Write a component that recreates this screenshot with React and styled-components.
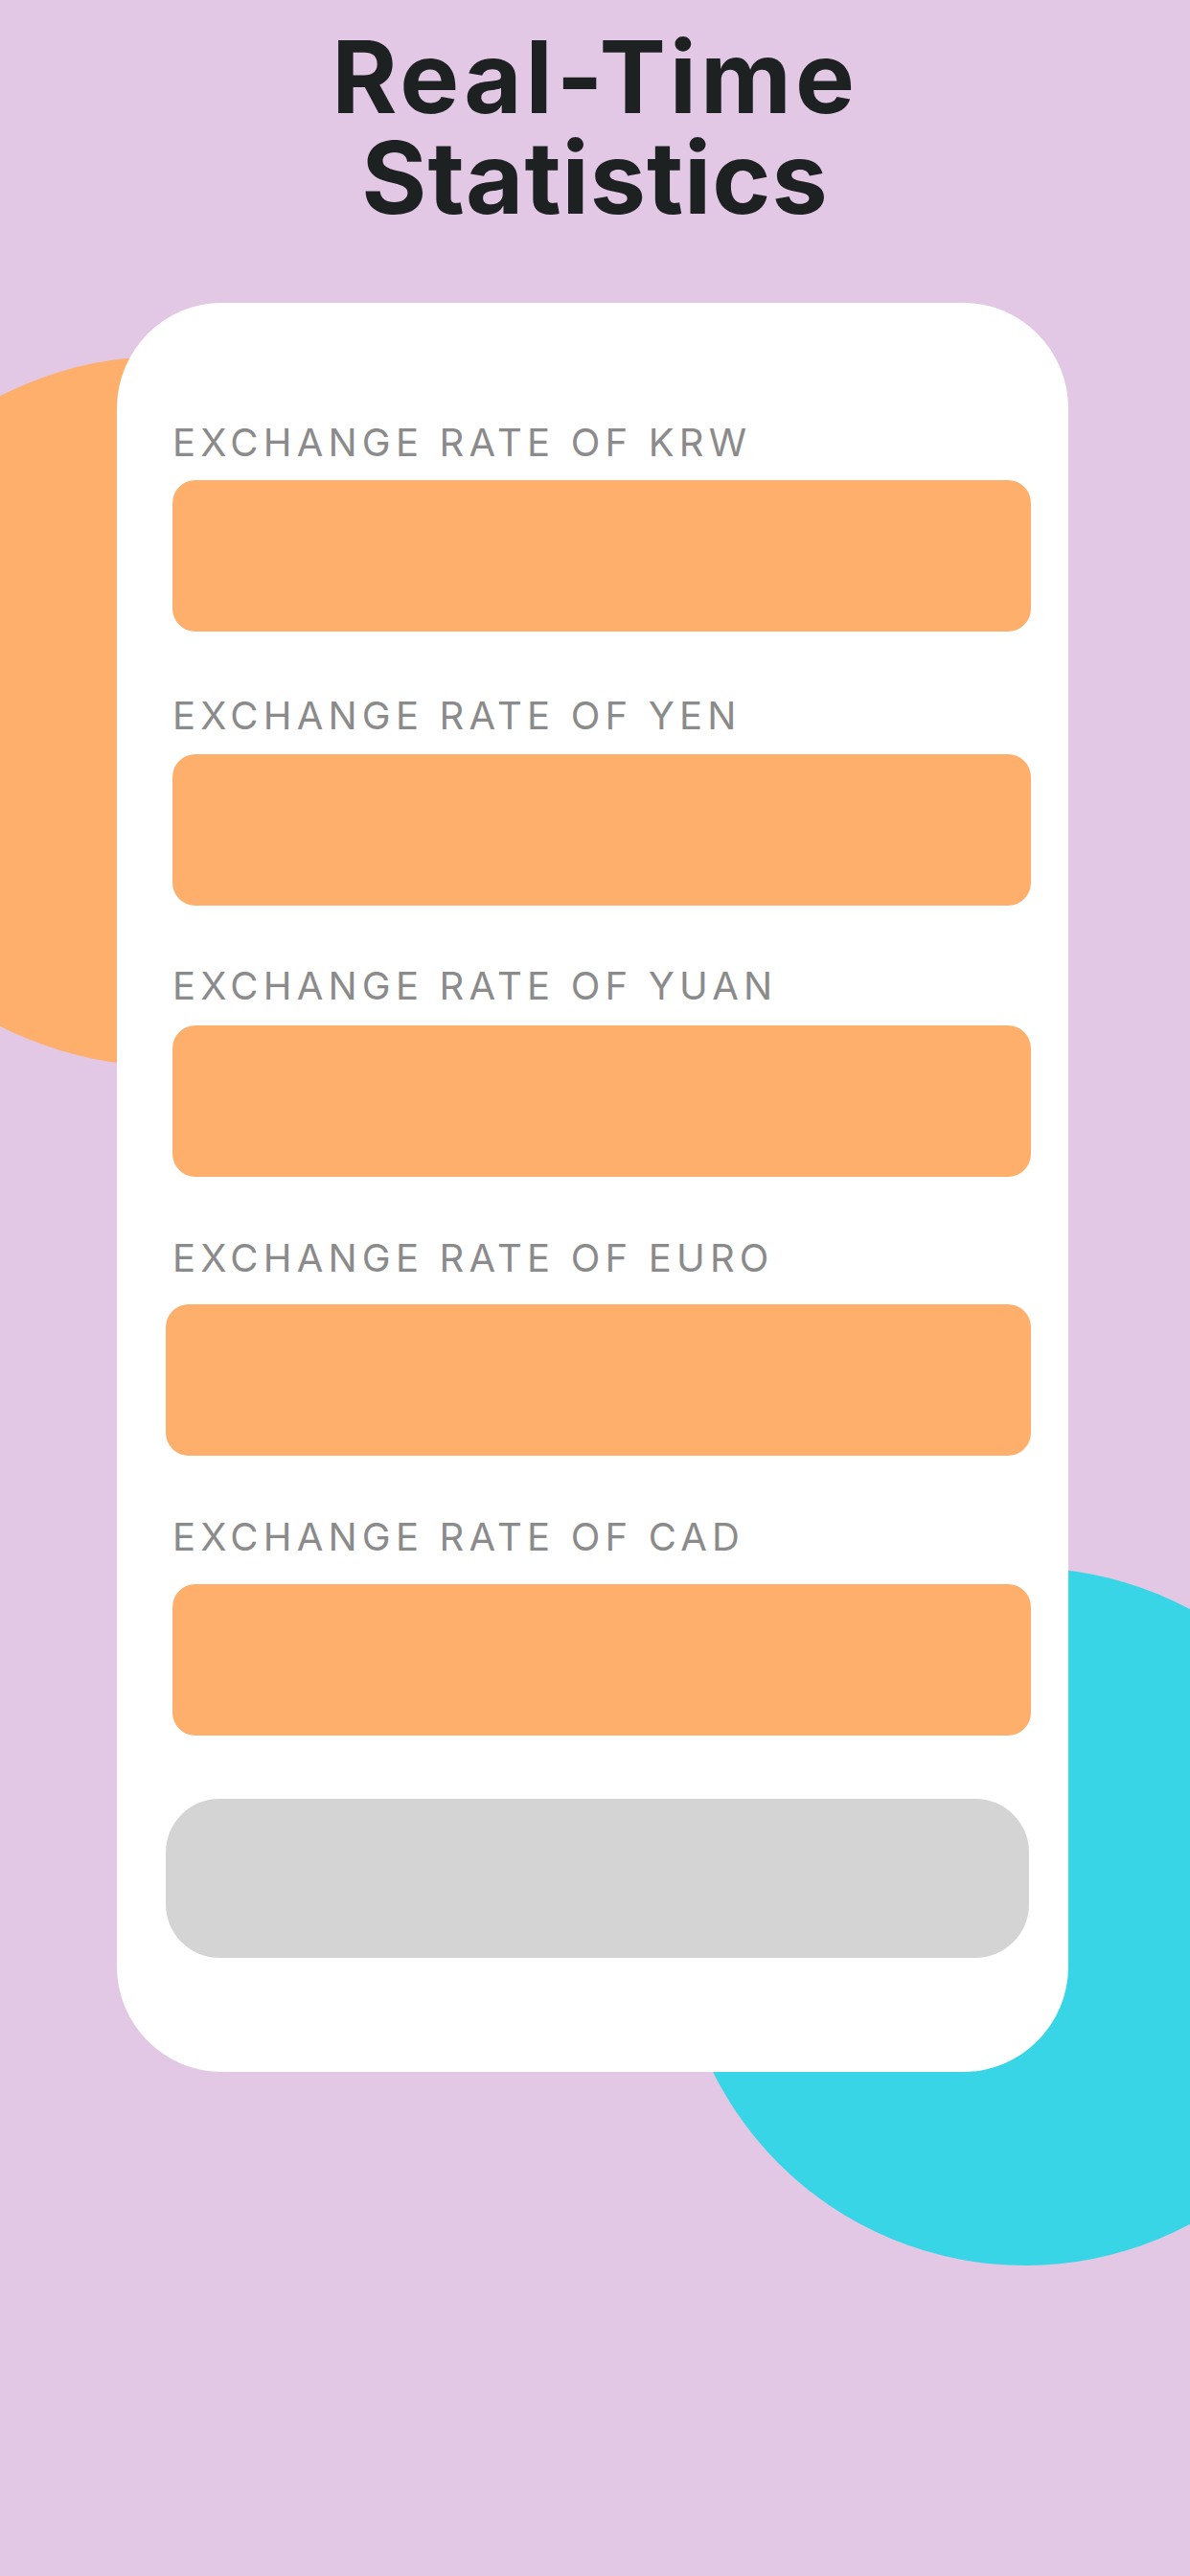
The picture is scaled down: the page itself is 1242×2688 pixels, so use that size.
import React from "react";
import styled, { createGlobalStyle } from "styled-components";

const GlobalStyle = createGlobalStyle`
  html, body {
    margin: 0;
    padding: 0;
    background: #e2c8e4;
  }
`;

const Page = styled.div`
  position: relative;
  min-height: 100vh;
  overflow: hidden;
  background: #e2c8e4;
  padding-top: 28px;
  box-sizing: border-box;
`;

// decorative circles sitting behind the card
const Blob = styled.div`
  position: absolute;
  left: ${(p) => p.$left}px;
  top: ${(p) => p.$top}px;
  width: ${(p) => p.$size}px;
  height: ${(p) => p.$size}px;
  border-radius: 50%;
  background: ${(p) => p.$color};
`;

const Title = styled.h1`
  position: relative;
  margin: 0;
  text-align: center;
  font-family: Inter, "Noto Sans", sans-serif;
  font-weight: 700;
  font-size: 104px;
  color: #1e2122;
`;

const TitleLine = styled.span`
  display: block;
  height: 105px;
  line-height: 105px;
  letter-spacing: ${(p) => p.$spacing}px;
`;

const Card = styled.div`
  position: relative;
  margin: 78px 0 0 122px;
  width: 993px;
  box-sizing: border-box;
  padding: 126px 39px 119px 58px;
  background: #fff;
  border-radius: 110px;
  display: flex;
  flex-direction: column;
`;

const Field = styled.div`
  display: flex;
  flex-direction: column;
  margin-top: ${(p) => p.$top}px;
`;

const Label = styled.label`
  font-family: Inter, "Noto Sans", sans-serif;
  font-weight: 400;
  font-size: 40px;
  line-height: 40px;
  letter-spacing: 5.2px;
  color: #8b8b8b;
  white-space: nowrap;
`;

const RateBox = styled.div`
  margin-top: ${(p) => p.$gap}px;
  margin-left: ${(p) => p.$shift || 0}px;
  height: 158px;
  border-radius: 24px;
  background: #fdaf6b;
`;

const SubmitButton = styled.button`
  margin: 66px 0 0 -7px;
  width: 901px;
  height: 166px;
  border: none;
  border-radius: 56px;
  background: #d4d4d4;
`;

const rates = [
  { code: "KRW", top: 0, gap: 19 },
  { code: "YEN", top: 68, gap: 20 },
  { code: "YUAN", top: 64, gap: 21 },
  { code: "EURO", top: 65, gap: 28, shift: -7 },
  { code: "CAD", top: 65, gap: 29 },
];

export default function App() {
  return (
    <Page>
      <GlobalStyle />
      <Blob $left={-200} $top={372} $size={740} $color="#fdaf6b" />
      <Blob $left={706} $top={1636} $size={728} $color="#37d5e5" />
      <Title>
        <TitleLine $spacing={4}>Real-Time</TitleLine>
        <TitleLine $spacing={1}>Statistics</TitleLine>
      </Title>
      <Card>
        {rates.map((r) => (
          <Field key={r.code} $top={r.top}>
            <Label>EXCHANGE RATE OF {r.code}</Label>
            <RateBox $gap={r.gap} $shift={r.shift} />
          </Field>
        ))}
        <SubmitButton />
      </Card>
    </Page>
  );
}
